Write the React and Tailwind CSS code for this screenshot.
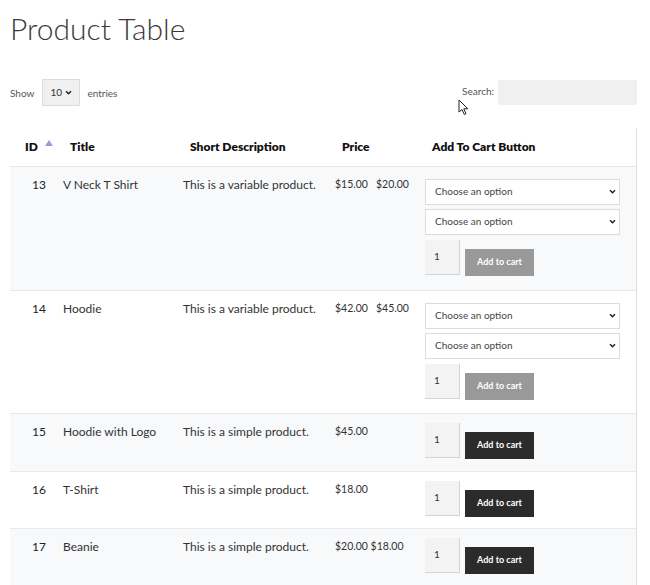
import React from 'react';

const rows = [
  { id: 13, title: 'V Neck T Shirt', desc: 'This is a variable product.', price: '$15.00 \u00a0 $20.00', variable: true, h: 'h-[124px]', bg: 'bg-[#f8f9fb]' },
  { id: 14, title: 'Hoodie', desc: 'This is a variable product.', price: '$42.00 \u00a0 $45.00', variable: true, h: 'h-[123px]', bg: 'bg-white' },
  { id: 15, title: 'Hoodie with Logo', desc: 'This is a simple product.', price: '$45.00', h: 'h-[58px]', bg: 'bg-[#f8f9fb]' },
  { id: 16, title: 'T-Shirt', desc: 'This is a simple product.', price: '$18.00', h: 'h-[57px]', bg: 'bg-white' },
  { id: 17, title: 'Beanie', desc: 'This is a simple product.', price: '$20.00 $18.00', h: 'h-[57px]', bg: 'bg-[#f8f9fb]' },
];

const Chevron = () => (
  <svg width="7" height="5" viewBox="0 0 8 6" className="text-[#222]">
    <path d="M1 1.5 L4 4.5 L7 1.5" fill="none" stroke="currentColor" strokeWidth="1.8" />
  </svg>
);

const OptionSelect = () => (
  <div className="flex items-center justify-between w-[195px] h-[26px] border border-[#dcdcdc] bg-white pl-[9px] pr-[3px] text-[10px] text-[#444]">
    <span>Choose an option</span>
    <Chevron />
  </div>
);

const CartControls = ({ disabled }) => (
  <div className="flex items-center gap-[5px]">
    <div className="w-[35px] h-[35px] bg-[#f3f3f4] border-r border-b border-[#d4d4d4] flex items-center pl-[9px] text-[10px] text-[#333]">1</div>
    <button className={`mt-[10px] w-[69px] h-[27px] text-[9px] font-bold text-white ${disabled ? 'bg-[#999999]' : 'bg-[#2b2b2b]'}`}>
      Add to cart
    </button>
  </div>
);

export default function App() {
  return (
    <div className="relative w-[650px] h-[585px] overflow-hidden bg-white text-[#333] font-['Lato','Liberation_Sans',sans-serif]">
      <h1 className="pl-[10px] pt-[8px] text-[30px] font-light leading-[40px] text-[#3a3a3a]">Product Table</h1>

      <div className="flex items-center justify-between pl-[10px] pr-[13px] mt-[31px] text-[10px] text-[#555]">
        <div className="flex items-center">
          <span className="mt-[2px]">Show</span>
          <div className="ml-[8px] w-[38px] h-[27px] bg-[#f0f0f1] border border-[#dcdcdc] flex items-center justify-between px-[7px] text-[#333]">
            <span>10</span>
            <Chevron />
          </div>
          <span className="ml-[7px] mt-[2px]">entries</span>
        </div>
        <div className="flex items-center">
          <span className="-mt-[2px]">Search:</span>
          <div className="ml-[4px] w-[139px] h-[25px] bg-[#f0f0f1]"></div>
        </div>
      </div>

      <div className="ml-[10px] mt-[22px] w-[627px] border-r border-[#dedede]">
        <table className="w-[626px] table-fixed border-collapse text-[12px]">
          <colgroup>
            <col className="w-[45px]" />
            <col className="w-[120px]" />
            <col className="w-[152px]" />
            <col className="w-[90px]" />
            <col className="w-[219px]" />
          </colgroup>
          <thead>
            <tr className="h-[38px] border-b border-[#e6e6e6] text-left text-[#111]">
              <th className="pl-[15px] font-extrabold">
                <span className="flex items-center gap-[7px]">
                  ID
                  <svg width="8" height="6" viewBox="0 0 8 6" className="-mt-[8px]">
                    <path d="M0 6 L4 0 L8 6 Z" fill="#9b9bd6" />
                  </svg>
                </span>
              </th>
              <th className="pl-[15px] font-extrabold">Title</th>
              <th className="pl-[15px] font-extrabold">Short Description</th>
              <th className="pl-[15px] font-extrabold">Price</th>
              <th className="pl-[15px] font-extrabold">Add To Cart Button</th>
            </tr>
          </thead>
          <tbody>
            {rows.map((r) => (
              <tr key={r.id} className={`${r.h} ${r.bg} border-t border-[#e9e9e9] align-top`}>
                <td className="pr-[9px] pt-[9px] text-right text-[#222]">{r.id}</td>
                <td className="pl-[8px] pt-[9px]">{r.title}</td>
                <td className="pl-[8px] pt-[9px]">{r.desc}</td>
                <td className="pl-[8px] pt-[10px] text-[10.5px] whitespace-nowrap">{r.price}</td>
                <td className="pl-[8px] pt-[12px]">
                  {r.variable ? (
                    <div className="flex flex-col gap-[4px]">
                      <OptionSelect />
                      <OptionSelect />
                      <CartControls disabled />
                    </div>
                  ) : (
                    <div className="-mt-[4px]">
                      <CartControls />
                    </div>
                  )}
                </td>
              </tr>
            ))}
          </tbody>
        </table>
      </div>

      <svg className="absolute left-[458px] top-[99px]" width="11" height="17" viewBox="0 0 11 17">
        <path d="M1 1 L1 13 L4 10.5 L6.3 15.5 L8 14.7 L5.8 9.8 L9.8 9.8 Z" fill="white" stroke="#222" strokeWidth="1" strokeLinejoin="round" />
      </svg>
    </div>
  );
}
